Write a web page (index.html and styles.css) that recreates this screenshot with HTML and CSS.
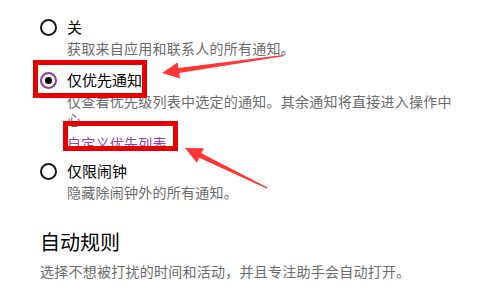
FILE: index.html
```html
<!DOCTYPE html>
<html lang="zh-CN">
<head>
  <meta charset="UTF-8">
  <title>专注助手</title>
  <link rel="stylesheet" href="styles.css">
</head>
<body>

  <div class="panel">
    <!-- 关 -->
    <div class="option">
      <div class="option-head">
        <span class="radio"></span>
        <span class="option-title">关</span>
      </div>
      <div class="option-desc">获取来自应用和联系人的所有通知。</div>
    </div>

    <!-- 仅优先通知 -->
    <div class="option">
      <div class="option-head">
        <span class="radio checked"></span>
        <span class="option-title">仅优先通知</span>
      </div>
      <div class="option-desc">仅查看优先级列表中选定的通知。其余通知将直接进入操作中心</div>
      <a class="option-link" href="#">自定义优先列表</a>
    </div>

    <!-- 仅限闹钟 -->
    <div class="option">
      <div class="option-head">
        <span class="radio"></span>
        <span class="option-title">仅限闹钟</span>
      </div>
      <div class="option-desc">隐藏除闹钟外的所有通知。</div>
    </div>

    <h2 class="section-title">自动规则</h2>
    <p class="section-desc">选择不想被打扰的时间和活动，并且专注助手会自动打开。</p>
  </div>

  <!-- annotations drawn over the screenshot -->
  <svg class="marks" width="479" height="289" viewBox="0 0 479 289">
    <rect x="35.5" y="62.5" width="109" height="33" fill="none" stroke="#e60000" stroke-width="5"/>
    <rect x="65.5" y="123.5" width="110" height="25" fill="none" stroke="#e60000" stroke-width="5"/>
    <polygon fill="#ff3636" points="162,73 177.6,62.6 178.4,68 283,55 283.2,56.2 179.2,73 180,78.4"/>
    <polygon fill="#ff3636" points="185,148 203.8,148.3 201.4,153.3 267.5,187.4 266.6,188.4 199.2,157.7 196.8,162.7"/>
  </svg>

</body>
</html>
```

FILE: styles.css
```css
* {
  box-sizing: border-box;
}
body {
  margin: 0;
  padding: 0;
  background: #ffffff;
  font-family: "Noto Sans CJK SC", "Noto Sans", sans-serif;
  color: #000;
  overflow: hidden;
}
.panel {
  padding: 17px 0 0 40px;
}

/* Radio options */
.option {
  margin-bottom: 13px;
}
.option-head {
  display: flex;
  align-items: center;
  height: 20px;
}
.radio {
  width: 17px;
  height: 17px;
  border: 2px solid #1a1a1a;
  border-radius: 50%;
  margin-right: 10px;
  display: flex;
  align-items: center;
  justify-content: center;
}
.radio.checked {
  border-color: #8b3a99;
}
.radio.checked::after {
  content: "";
  width: 7px;
  height: 7px;
  border-radius: 50%;
  background: #000;
}
.option-title {
  font-size: 15px;
  line-height: 20px;
}
.option-desc {
  margin-top: 2px;
  padding-left: 27px;
  width: 422px;
  font-size: 14px;
  line-height: 18px;
  letter-spacing: 0.25px;
  color: #6b6b6b;
}
.option-link {
  display: block;
  margin: 7px 0 -3px 27px;
  font-size: 14px;
  line-height: 16px;
  letter-spacing: 0.25px;
  color: #96409f;
  text-decoration: none;
}

/* Auto rules */
.section-title {
  margin: 27px 0 0;
  font-size: 20px;
  font-weight: normal;
  line-height: 28px;
}
.section-desc {
  margin: 6px 0 0;
  font-size: 14px;
  line-height: 18px;
  letter-spacing: 0.25px;
  color: #6b6b6b;
}

/* Annotations */
.marks {
  position: absolute;
  left: 0;
  top: 0;
  pointer-events: none;
}
```
